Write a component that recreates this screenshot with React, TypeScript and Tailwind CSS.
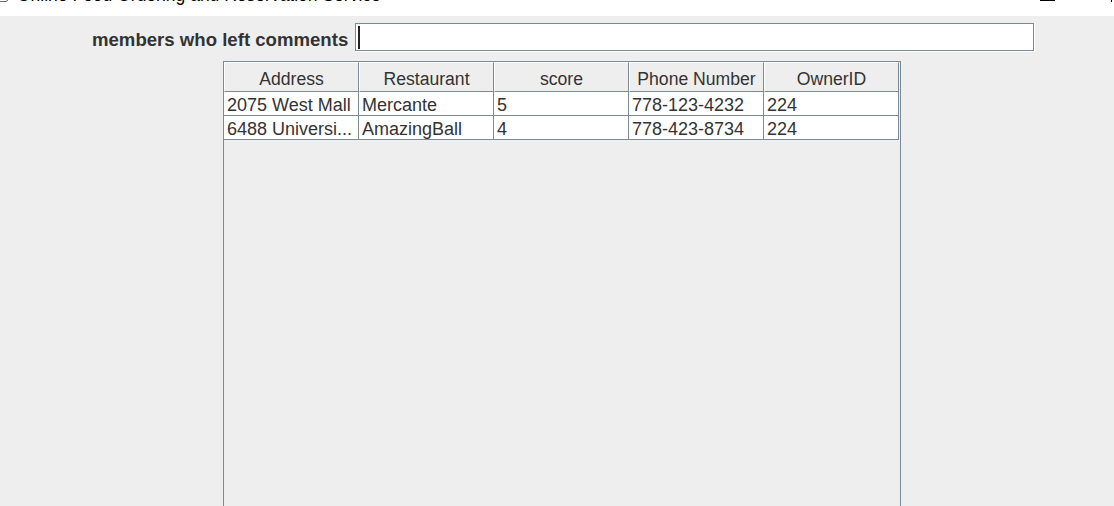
const columns = ["Address", "Restaurant", "score", "Phone Number", "OwnerID"];

const rows = [
  ["2075 West Mall", "Mercante", "5", "778-123-4232", "224"],
  ["6488 Universi...", "AmazingBall", "4", "778-423-8734", "224"],
];

export default function App() {
  return (
    <div className="w-[1114px] h-[506px] overflow-hidden bg-[#eeeeee] font-['Liberation_Sans',Arial,sans-serif] text-[#333333]">
      {/* window title bar, clipped at the top */}
      <div className="h-[16px] bg-white overflow-hidden flex items-start">
        <div className="w-[10px] h-[10px] -mt-[8px] -ml-[2px] border border-[#6b6b6b] rounded-[2px] shrink-0" />
        <div className="ml-[9px] -mt-[13px] text-[17.5px] leading-[16px] text-black whitespace-nowrap">
          Online Food Ordering and Reservation Service
        </div>
        <div className="ml-auto w-[15px] h-px bg-black mr-[56px] shrink-0" />
        <div className="w-px h-[2px] bg-black mr-[2px] shrink-0" />
      </div>

      <div className="pt-[7px]">
        {/* search row */}
        <div className="flex items-start pl-[92px]">
          <div className="w-[263px] pt-[7px] text-[18.6px] leading-[20px] font-bold whitespace-nowrap">members who left comments</div>
          <div className="w-[679px] h-[28px] bg-white border border-[#7a8a99] shadow-[1px_1px_0_#ffffff] pt-[2px] pl-[2px]">
            <div className="w-[2px] h-[23px] bg-[#222222]" />
          </div>
        </div>

        {/* table in scroll pane */}
        <div className="mt-[10px] ml-[223px] w-[678px] h-[460px] border border-[#7a8a99] bg-[#eeeeee]">
          <div className="flex">
            {columns.map((c) => (
              <div
                key={c}
                className="w-[135px] h-[30px] border-t border-l border-white border-r border-b border-r-[#7a8a99] border-b-[#7a8a99] bg-[#eeeeee] text-center text-[17.6px] leading-[25px] pt-[4px] whitespace-nowrap"
              >
                {c}
              </div>
            ))}
          </div>
          {rows.map((r, i) => (
            <div key={i} className="flex">
              {r.map((v, j) => (
                <div
                  key={j}
                  className="w-[135px] h-[24px] bg-white border-r border-b border-[#7a8a99] pl-[3px] pt-[3px] text-[18px] leading-[20px] whitespace-nowrap overflow-hidden"
                >
                  {v}
                </div>
              ))}
            </div>
          ))}
        </div>
      </div>
    </div>
  );
}
